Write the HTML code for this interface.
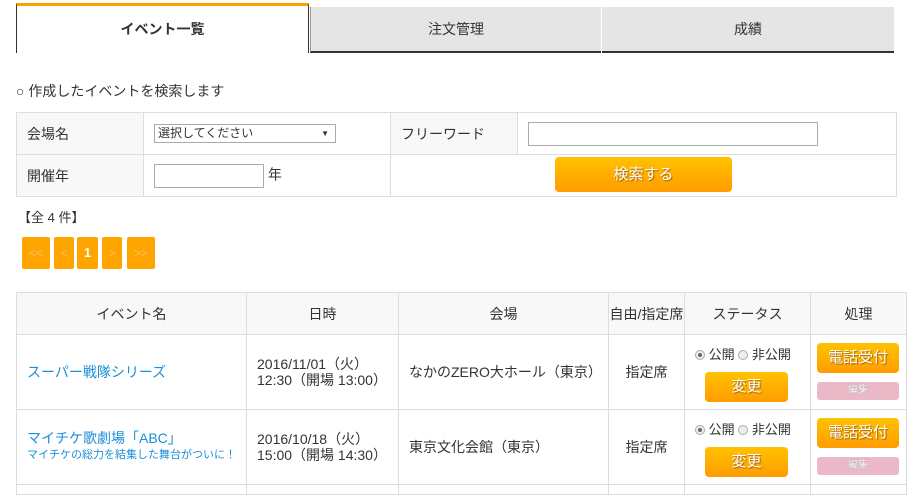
<!DOCTYPE html><html><head><meta charset="utf-8"><style>
*{box-sizing:border-box;margin:0;padding:0}
body{width:917px;height:489px;overflow:hidden;background:#fff;font-family:"Liberation Sans","Noto Sans CJK JP",sans-serif;font-size:14px;color:#333;position:relative}
.a{position:absolute}
.tab{position:absolute;text-align:center;font-size:14px}
table{border-collapse:collapse;position:absolute}
td{border:1px solid #ddd;padding:0 10px}
.lb{background:#f8f8f8}
.pg{position:absolute;top:237px;height:32px;background:#ffa500;border-radius:2px;color:#f7c26a;font-size:12px;text-align:center;line-height:32px}
.ob{background:linear-gradient(#ffc200,#ff9c00);border-radius:4px;color:#fff;text-align:center;text-shadow:1px 1px 1px #a06000;position:absolute}
.pk{background:#ebb8c8;border-radius:3px;color:#fff;text-align:center;position:absolute;font-size:10px;text-shadow:0 0 1px #777}
.rad{display:inline-block;width:10px;height:10px;border-radius:50%;border:1px solid #aaa;background:#eee;vertical-align:-1px;position:relative}
.on::after{content:"";position:absolute;left:2px;top:2px;width:4px;height:4px;border-radius:50%;background:#666}
.lk{color:#1a8fd8}
</style></head><body>
<div class="tab" style="left:16px;top:3px;width:293px;height:50px;border-top:3px solid #f8a100;border-left:1px solid #333;border-right:1px solid #333;line-height:46px;font-weight:bold">イベント一覧</div>
<div class="tab" style="left:310px;top:7px;width:291px;height:46px;background:#e5e5e5;border-bottom:2px solid #333;border-left:1px solid #999;line-height:44px">注文管理</div>
<div class="tab" style="left:602px;top:7px;width:292px;height:46px;background:#e5e5e5;border-bottom:2px solid #333;line-height:44px">成績</div>
<div class="a" style="left:16px;top:81px">○ 作成したイベントを検索します</div>
<table style="left:16px;top:112px;width:881px">
<tr style="height:42px"><td class="lb" style="width:127px">会場名</td><td style="width:247px"><div style="width:182px;height:19px;border:1px solid #aaa;font-size:12px;line-height:17px;padding-left:3px;position:relative">選択してください<span style="position:absolute;right:6px;font-size:8px">▼</span></div></td><td class="lb" style="width:127px">フリーワード</td><td><div style="width:290px;height:24px;border:1px solid #aaa"></div></td></tr>
<tr style="height:42px"><td class="lb">開催年</td><td><div style="display:inline-block;width:110px;height:24px;border:1px solid #aaa;vertical-align:middle"></div> 年</td><td colspan="2"></td></tr>
</table>
<div class="ob" style="left:555px;top:157px;width:177px;height:35px;line-height:35px;font-size:15px">検索する</div>
<div class="a" style="left:18px;top:207px;font-size:13px">【全 4 件】</div>
<div class="pg" style="left:22px;width:28px">&lt;&lt;</div>
<div class="pg" style="left:54px;width:20px">&lt;</div>
<div class="pg" style="left:77px;width:21px;color:#fff;font-weight:bold;font-size:13px">1</div>
<div class="pg" style="left:102px;width:20px">&gt;</div>
<div class="pg" style="left:127px;width:28px">&gt;&gt;</div>
<table style="left:16px;top:292px;width:891px;text-align:center">
<tr style="height:42px;background:#f8f8f8"><td style="width:230px">イベント名</td><td style="width:152px">日時</td><td style="width:210px">会場</td><td style="width:76px;padding:0">自由/指定席</td><td style="width:126px">ステータス</td><td>処理</td></tr>
<tr style="height:75px"><td style="text-align:left"><span class="lk">スーパー戦隊シリーズ</span></td><td style="text-align:left;line-height:16px">2016/11/01（火）<br>12:30（開場 13:00）</td><td style="text-align:left">なかのZERO大ホール（東京）</td><td>指定席</td><td></td><td></td></tr>
<tr style="height:75px"><td style="text-align:left;line-height:15px"><span class="lk">マイチケ歌劇場「ABC」</span><br><span class="lk" style="font-size:11px">マイチケの総力を結集した舞台がついに！</span></td><td style="text-align:left;line-height:16px">2016/10/18（火）<br>15:00（開場 14:30）</td><td style="text-align:left">東京文化会館（東京）</td><td>指定席</td><td></td><td></td></tr>
<tr style="height:10px"><td></td><td></td><td></td><td></td><td></td><td></td></tr>
</table>
<div class="a" style="left:695px;top:344px;font-size:13px"><span class="rad on"></span> 公開 <span class="rad"></span> 非公開</div>
<div class="ob" style="left:705px;top:372px;width:83px;height:30px;line-height:30px;font-size:15px">変更</div>
<div class="ob" style="left:817px;top:343px;width:82px;height:30px;line-height:30px;font-size:15px">電話受付</div>
<div class="pk" style="left:817px;top:382px;width:82px;height:18px;line-height:18px">編集</div>
<div class="a" style="left:695px;top:419px;font-size:13px"><span class="rad on"></span> 公開 <span class="rad"></span> 非公開</div>
<div class="ob" style="left:705px;top:447px;width:83px;height:30px;line-height:30px;font-size:15px">変更</div>
<div class="ob" style="left:817px;top:418px;width:82px;height:30px;line-height:30px;font-size:15px">電話受付</div>
<div class="pk" style="left:817px;top:457px;width:82px;height:18px;line-height:18px">編集</div>
</body></html>
